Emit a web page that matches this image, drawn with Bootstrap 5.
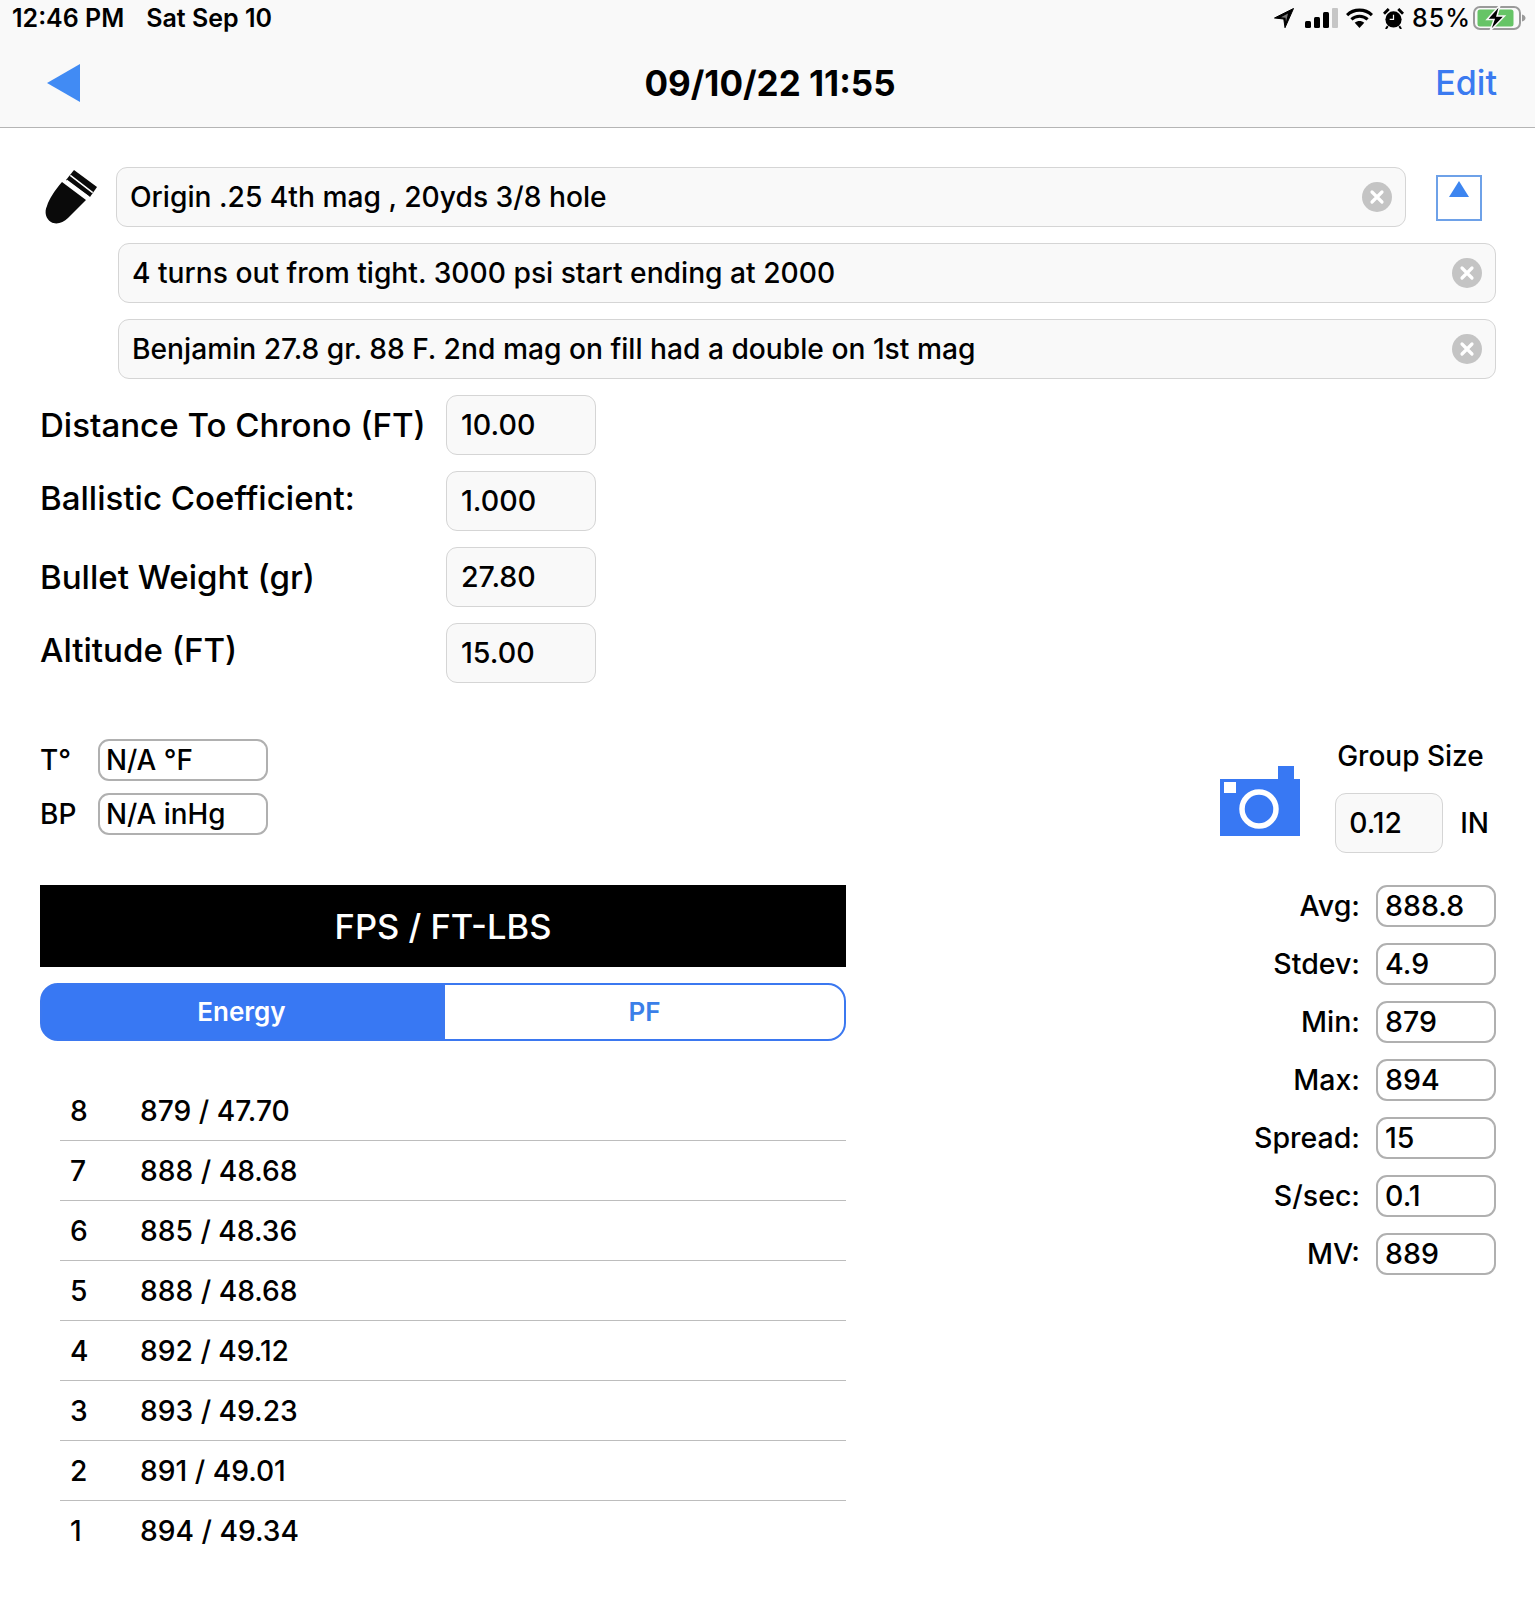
<!DOCTYPE html>
<html lang="en"><head><meta charset="utf-8"><title>Shot string</title>
<link href="https://cdn.jsdelivr.net/npm/bootstrap@5.3.0/dist/css/bootstrap.min.css" rel="stylesheet">
<style>
body{font-family:Inter,"Liberation Sans",sans-serif;color:#000;background:#fff;width:1535px;min-height:1609px;margin:0}
.top-bar{background:#f9f9f9;border-bottom:1px solid #b5b5b5;height:128px;padding:0 38px 0 12px}
.status-row{height:36px;font-size:25px;font-weight:600;line-height:36px}
.status-row .clock{margin-right:22px}
.status-icons{font-weight:500;margin-right:-29px;gap:10px}
.pct-txt{margin-left:-2px;margin-right:-8px;letter-spacing:1px}
.sig-ico{margin-left:1px}
.wifi-ico{margin-left:-2px}
.nav-row{height:91px;position:relative}
.nav-title{position:absolute;left:0;right:0;top:0;bottom:0;text-align:center;line-height:94px;font-size:35px;font-weight:700;padding-left:31px}
.nav-edit{font-size:34px;font-weight:500;color:#3b7af0;text-decoration:none;line-height:94px}
.back-arrow{margin-left:35px;margin-top:28px}
.page-main{padding:39px 39px 0 40px}
.field-box.form-control{background:#f9f9f9;border:1px solid #d5d5d5;border-radius:11px;height:60px;padding:0 13px;font-size:28.2px;font-weight:500;line-height:58px;color:#000}
.clear-dot{width:30px;height:30px;flex:none}
.shell-col{width:76px;flex:none}
.shell-col svg{overflow:visible}
.up-toggle{width:46px;height:46px;border:2px solid #6ea1e8;flex:none;margin:0 14px 0 30px;border-radius:0;background:#fff;padding:0;display:flex;justify-content:center;align-items:flex-start}
.stack-gap{gap:16px}
.indent-notes{margin-left:78px}
.spec-lbl{width:406px;font-size:33.1px;font-weight:500;line-height:40px}
.field-box.form-control.spec-val{width:150px;padding-left:14px;font-size:28.6px}
.spec-up{margin-top:-6px}
.wx-row{margin-top:56px}
.wx-lbl{width:58px;font-size:28px;font-weight:500;line-height:36px}
.ro-box{border:2px solid #b0b0b0;border-radius:11px;height:42px;line-height:38px;padding:0 7px;font-size:28.5px;font-weight:500;background:#fff}
.wx-box{width:170px;font-size:27.8px;padding:0 6px}
.wx-gap{gap:12px}
.cam-col{width:115px;padding-top:27px}
.group-title{font-size:28px;font-weight:500;line-height:36px;margin:-1px 0 19px 2px}
.group-val{width:108px!important}
.unit-txt{font-size:28px;font-weight:500;margin-left:17px;margin-right:7px}
.left-col{width:806px}
.bar-black{height:82px;background:#000;color:#fff;font-size:34.5px;font-weight:500;line-height:84px;text-align:center;margin-top:50px}
.seg-wrap{margin-top:16px;width:806px;height:58px}
.seg-wrap .btn{flex:0 0 50%;font-size:26px;font-weight:600;border:2px solid #3b78f0;height:58px;line-height:52px;padding:0}
.seg-wrap .seg-on{background:#3878f3;color:#fff;border-radius:18px 0 0 18px}
.seg-wrap .seg-off{background:#fff;color:#3b7fe8;border-radius:0 18px 18px 0;margin-left:0!important}
.shots{margin:40px 0 0 20px}
.shots .list-group-item{height:60px;padding:0;border:0;border-bottom:1px solid #bdbdbd;font-size:28.2px;font-weight:500;line-height:60px;display:flex;color:#000;background:transparent}
.shot-no{width:80px;padding-left:10px}
.stats-col{width:279px;margin-top:32px;gap:16px}
.stat-lbl{font-size:28.5px;font-weight:500;text-align:right;width:143px;margin-right:16px;line-height:36px}
.stat-box{width:120px}
</style></head>
<body>
<header class="top-bar">
  <div class="status-row d-flex justify-content-between align-items-center">
    <div><span class="clock">12:46 PM</span><span>Sat Sep 10</span></div>
    <div class="status-icons d-flex align-items-center">
      <svg width="20" height="20" viewBox="0 0 20 20"><path d="M19.500.5.5 10l9.300 1 1.200 8.700z" fill="#000" stroke="#000" stroke-linejoin="round"/><path d="M14 5.500 7 9.300l4.500.4.500 4z" fill="#777"/></svg>
      <svg class="sig-ico" width="33" height="20" viewBox="0 0 33 20"><rect x="0" y="13" width="6" height="7" rx="1.5"/><rect x="9" y="9" width="6" height="11" rx="1.5"/><rect x="18" y="4" width="6" height="16" rx="1.5"/><rect x="27" y="0" width="6" height="20" rx="1" fill="#c6c6c6"/></svg>
      <svg class="wifi-ico" width="27" height="21" viewBox="0 0 28 22"><path d="M1 7.500C8 .5 20 .5 27 7.500" fill="none" stroke="#000" stroke-width="3.200"/><path d="M5.500 12c4.800-4.500 12.200-4.500 17 0" fill="none" stroke="#000" stroke-width="3.200"/><path d="M14 21l-5-5.500c3-2.400 7-2.400 10 0z"/></svg>
      <svg width="21" height="21" viewBox="0 0 20 22"><circle cx="10" cy="12" r="8.500"/><path d="M10 7v5H6" fill="none" stroke="#f9f9f9" stroke-width="1.300"/><path d="M0 6l5-5M20 6l-5-5" stroke="#000" stroke-width="3"/><path d="M4 19l-2 3M16 19l2 3" stroke="#000" stroke-width="2"/></svg>
      <span class="pct-txt">85%</span>
      <svg width="53" height="26" viewBox="0 0 53 26"><rect x="1" y="2" width="46" height="22" rx="6" fill="none" stroke="#9a9a9a" stroke-width="2"/><rect x="4.500" y="4.500" width="36" height="17" rx="2.500" fill="#66c466"/><path d="M49 9.500v7c2-.5 3.500-1.800 3.500-3.500S51 10 49 9.500z" fill="#9a9a9a"/><path d="M27 0 14 14.500h7L17 26 31.500 11H24z" stroke="#f9f9f9" stroke-width="1.500"/></svg>
    </div>
  </div>
  <div class="nav-row d-flex justify-content-between align-items-start">
    <svg class="back-arrow" width="34" height="38" viewBox="0 0 34 38"><path d="M0 19 33 0v38z" fill="#418bf4"/></svg>
    <div class="nav-title">09/10/22 11:55</div>
    <a class="nav-edit position-relative" href="#">Edit</a>
  </div>
</header>
<main class="page-main">
  <div class="d-flex align-items-start">
    <div class="shell-col">
      <svg width="76" height="60" viewBox="40 167 76 60" class="d-block"><path d="M62 182 86 200 68 218C63 223 56 225 51 222 46 219 44 212 47 206 49 199 55 190 62 182Z" fill="#0a0a0a"/><path d="M74 170 97 187 90 197 66 180Z" fill="#0a0a0a"/><path d="M70.300 175.300 92.700 192.700M66.700 180.300 89 197" stroke="#fff" stroke-width="1.500" fill="none"/></svg>
    </div>
    <div class="form-control field-box d-flex justify-content-between align-items-center flex-grow-1 w-auto"><span>Origin .25 4th mag , 20yds 3/8 hole</span>
      <svg class="clear-dot" viewBox="0 0 30 30"><circle cx="15" cy="15" r="15" fill="#c4c4c4"/><path d="M10 10l10 10M20 10 10 20" stroke="#fff" stroke-width="3.200" stroke-linecap="round"/></svg></div>
    <button class="up-toggle mt-2" type="button" aria-label="Collapse"><svg width="20" height="16" viewBox="0 0 20 16" class="mt-1"><path d="M10 0 20 16H0z" fill="#3d85f0"/></svg></button>
  </div>
  <div class="d-flex flex-column stack-gap mt-3 indent-notes">
    <div class="form-control field-box d-flex justify-content-between align-items-center"><span>4 turns out from tight. 3000 psi start ending at 2000</span>
      <svg class="clear-dot" viewBox="0 0 30 30"><circle cx="15" cy="15" r="15" fill="#c4c4c4"/><path d="M10 10l10 10M20 10 10 20" stroke="#fff" stroke-width="3.200" stroke-linecap="round"/></svg></div>
    <div class="form-control field-box d-flex justify-content-between align-items-center"><span>Benjamin 27.8 gr. 88 F. 2nd mag on fill had a double on 1st mag</span>
      <svg class="clear-dot" viewBox="0 0 30 30"><circle cx="15" cy="15" r="15" fill="#c4c4c4"/><path d="M10 10l10 10M20 10 10 20" stroke="#fff" stroke-width="3.200" stroke-linecap="round"/></svg></div>
  </div>
  <div class="d-flex flex-column stack-gap mt-3">
    <div class="d-flex align-items-center"><div class="spec-lbl">Distance To Chrono (FT)</div><div class="form-control field-box spec-val">10.00</div></div>
    <div class="d-flex align-items-center"><div class="spec-lbl spec-up">Ballistic Coefficient:</div><div class="form-control field-box spec-val">1.000</div></div>
    <div class="d-flex align-items-center"><div class="spec-lbl">Bullet Weight (gr)</div><div class="form-control field-box spec-val">27.80</div></div>
    <div class="d-flex align-items-center"><div class="spec-lbl spec-up">Altitude (FT)</div><div class="form-control field-box spec-val">15.00</div></div>
  </div>
  <div class="d-flex justify-content-between align-items-start wx-row">
    <div class="left-col">
      <div class="d-flex flex-column wx-gap">
        <div class="d-flex align-items-center"><div class="wx-lbl">T°</div><div class="ro-box wx-box">N/A °F</div></div>
        <div class="d-flex align-items-center"><div class="wx-lbl">BP</div><div class="ro-box wx-box">N/A inHg</div></div>
      </div>
      <div class="bar-black">FPS / FT-LBS</div>
      <div class="btn-group seg-wrap" role="group">
        <button class="btn seg-on" type="button">Energy</button>
        <button class="btn seg-off" type="button">PF</button>
      </div>
      <ul class="list-group list-group-flush shots">
        <li class="list-group-item"><span class="shot-no">8</span><span>879 / 47.70</span></li>
        <li class="list-group-item"><span class="shot-no">7</span><span>888 / 48.68</span></li>
        <li class="list-group-item"><span class="shot-no">6</span><span>885 / 48.36</span></li>
        <li class="list-group-item"><span class="shot-no">5</span><span>888 / 48.68</span></li>
        <li class="list-group-item"><span class="shot-no">4</span><span>892 / 49.12</span></li>
        <li class="list-group-item"><span class="shot-no">3</span><span>893 / 49.23</span></li>
        <li class="list-group-item"><span class="shot-no">2</span><span>891 / 49.01</span></li>
        <li class="list-group-item"><span class="shot-no">1</span><span>894 / 49.34</span></li>
      </ul>
    </div>
    <div>
      <div class="d-flex align-items-start justify-content-end">
        <div class="cam-col">
          <svg width="80" height="70" viewBox="0 0 80 70" class="d-block"><path d="M0 13H58V0H74V13H80V70H0Z" fill="#3878f3"/><rect x="4" y="16" width="12" height="11" fill="#fff"/><circle cx="39" cy="43" r="17" fill="none" stroke="#fff" stroke-width="5.500"/></svg>
        </div>
        <div>
          <div class="group-title">Group Size</div>
          <div class="d-flex align-items-center"><div class="form-control field-box group-val">0.12</div><span class="unit-txt">IN</span></div>
        </div>
      </div>
      <div class="d-flex flex-column stats-col ms-auto">
        <div class="d-flex align-items-center"><div class="stat-lbl">Avg:</div><div class="ro-box stat-box">888.8</div></div>
        <div class="d-flex align-items-center"><div class="stat-lbl">Stdev:</div><div class="ro-box stat-box">4.9</div></div>
        <div class="d-flex align-items-center"><div class="stat-lbl">Min:</div><div class="ro-box stat-box">879</div></div>
        <div class="d-flex align-items-center"><div class="stat-lbl">Max:</div><div class="ro-box stat-box">894</div></div>
        <div class="d-flex align-items-center"><div class="stat-lbl">Spread:</div><div class="ro-box stat-box">15</div></div>
        <div class="d-flex align-items-center"><div class="stat-lbl">S/sec:</div><div class="ro-box stat-box">0.1</div></div>
        <div class="d-flex align-items-center"><div class="stat-lbl">MV:</div><div class="ro-box stat-box">889</div></div>
      </div>
    </div>
  </div>
</main>
</body></html>
